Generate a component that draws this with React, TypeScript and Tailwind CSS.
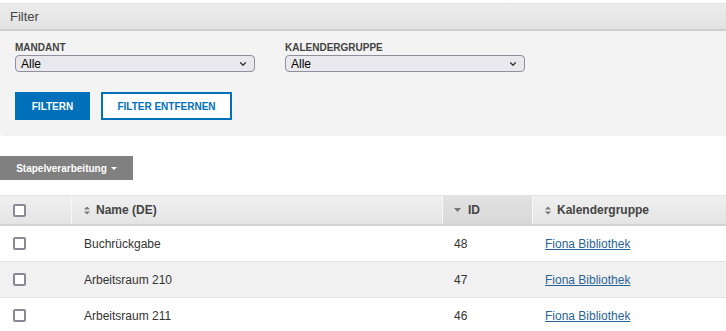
import { ChevronDown } from "lucide-react";

const rows = [
  { name: "Buchrückgabe", id: 48, group: "Fiona Bibliothek" },
  { name: "Arbeitsraum 210", id: 47, group: "Fiona Bibliothek" },
  { name: "Arbeitsraum 211", id: 46, group: "Fiona Bibliothek" },
];

function Checkbox() {
  return <div className="w-[13px] h-[13px] border-2 border-[#8c8895] rounded-[2px] bg-white" />;
}

function SortBoth() {
  return (
    <svg width="6" height="9" viewBox="0 0 6 9" className="mr-[6px]">
      <path d="M0 3.5 L3 0.5 L6 3.5 Z" fill="#777" />
      <path d="M0 5.5 L3 8.5 L6 5.5 Z" fill="#777" />
    </svg>
  );
}

function SortDown() {
  return (
    <svg width="7" height="4" viewBox="0 0 7 4" className="mr-[7px]">
      <path d="M0 0 L7 0 L3.5 4 Z" fill="#777" />
    </svg>
  );
}

function FakeSelect({ label }: { label: string }) {
  return (
    <div className="flex flex-col w-[240px]">
      <span className="text-[10px] font-bold text-[#444] leading-[12px] mb-[1px]">{label}</span>
      <div className="h-[17px] flex items-center justify-between bg-[#e9e9ed] border border-[#8f8f9d] rounded-[4px] pl-[5px] pr-[6px]">
        <span className="text-[12px] text-black leading-none">Alle</span>
        <ChevronDown className="w-[10px] h-[10px] text-[#333]" strokeWidth={3} />
      </div>
    </div>
  );
}

export default function App() {
  return (
    <div className="w-[726px] h-[331px] overflow-hidden bg-white font-['Liberation_Sans',Arial,sans-serif] pt-[3px]">
      <div className="bg-[#f3f3f3] rounded-bl-[4px] border-t border-[#e6e6e6] h-[133px]">
        <div className="h-[27px] flex items-center px-[10px] bg-gradient-to-b from-[#ececec] to-[#e2e2e2] border-b-2 border-[#cfcfcf]">
          <span className="text-[13px] text-[#444]">Filter</span>
        </div>
        <div className="px-[15px] pt-[11px]">
          <div className="flex gap-[30px]">
            <FakeSelect label="MANDANT" />
            <FakeSelect label="KALENDERGRUPPE" />
          </div>
          <div className="flex gap-[11px] mt-[20px]">
            <button className="h-[28px] w-[75px] bg-[#0070bb] text-white text-[10px] font-bold">FILTERN</button>
            <button className="h-[28px] w-[131px] border-2 border-[#0070bb] bg-white text-[#0070bb] text-[10px] font-bold">
              FILTER ENTFERNEN
            </button>
          </div>
        </div>
      </div>

      <div className="mt-[20px] h-[24px] w-[133px] bg-[#808080] flex items-center justify-center gap-[4px]">
        <span className="text-white text-[10px] font-bold">Stapelverarbeitung</span>
        <svg width="6" height="3" viewBox="0 0 6 3">
          <path d="M0 0 L6 0 L3 3 Z" fill="#fff" />
        </svg>
      </div>

      <div className="mt-[15px] text-[12px]">
        <div className="flex h-[31px] border-t border-[#e4e4e4] border-b-2 border-b-[#d4d4d4] bg-gradient-to-b from-[#f0f0f0] to-[#e4e4e4] font-bold text-[#444]">
          <div className="w-[72px] flex items-center pl-[13px] border-r border-[#f7f7f7]">
            <Checkbox />
          </div>
          <div className="w-[371px] flex items-center pl-[12px] border-r border-[#f7f7f7]">
            <SortBoth />
            Name (DE)
          </div>
          <div className="w-[90px] flex items-center pl-[11px] bg-gradient-to-b from-[#e2e2e2] to-[#d8d8d8] border-r border-[#f7f7f7]">
            <SortDown />
            ID
          </div>
          <div className="flex-1 flex items-center pl-[12px]">
            <SortBoth />
            Kalendergruppe
          </div>
        </div>
        {rows.map((r, i) => (
          <div
            key={r.id}
            className={`flex items-center h-[36px] border-b border-[#e3e3e3] text-[#333] ${i % 2 === 1 ? "bg-[#f1f1f1]" : "bg-white"}`}
          >
            <div className="w-[72px] pl-[13px]">
              <Checkbox />
            </div>
            <div className="w-[371px] pl-[12px]">{r.name}</div>
            <div className="w-[90px] pl-[11px]">{r.id}</div>
            <div className="flex-1 pl-[12px]">
              <a className="text-[#2a6496] underline">{r.group}</a>
            </div>
          </div>
        ))}
      </div>
    </div>
  );
}
